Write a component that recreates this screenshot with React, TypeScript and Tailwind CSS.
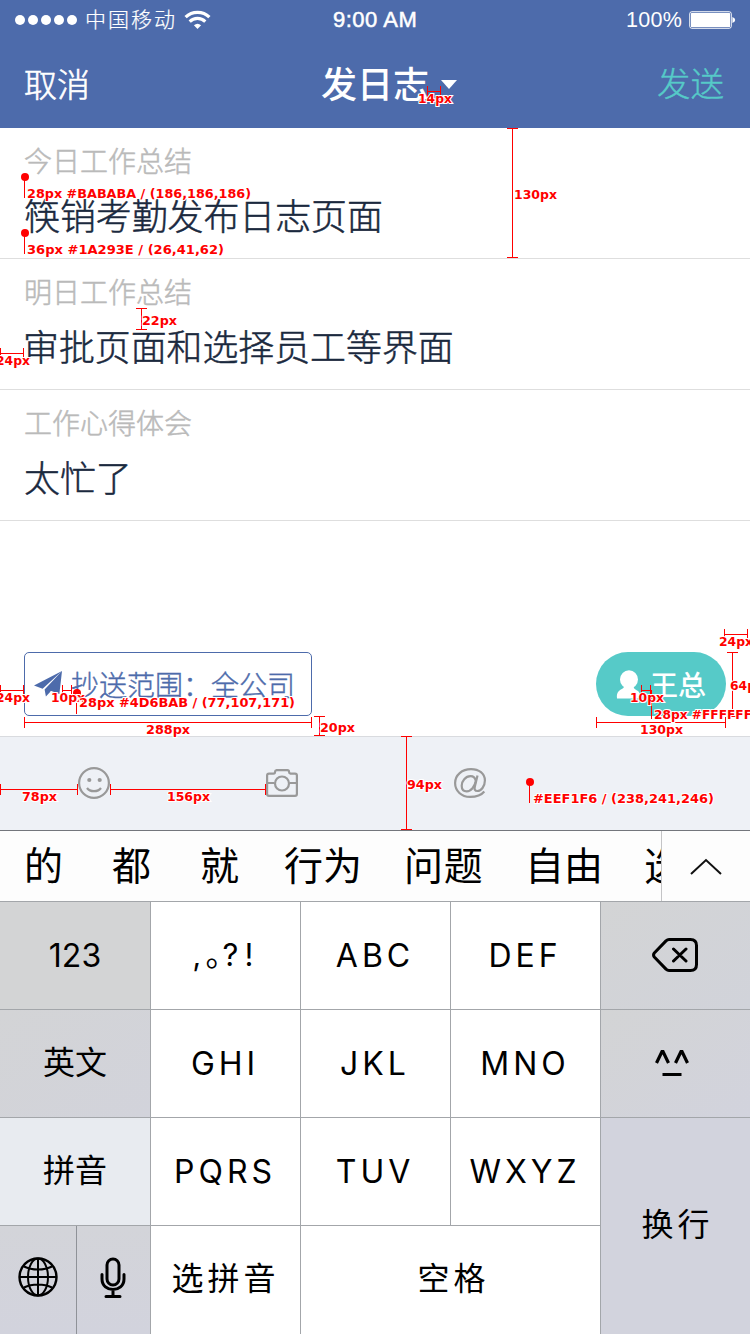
import React from "react";

const CJK = "font-['Noto_Sans_CJK_SC',sans-serif]";
const LINE = "border-[#a3a6aa]";

function StatusBar() {
  return (
    <div className="flex h-10 items-center text-white">
      <div className="flex w-[333px] items-center">
        <div className="ml-[15px] flex gap-[3px]">
          {[0, 1, 2, 3, 4].map((i) => (
            <span key={i} className="size-[10px] rounded-full bg-white" />
          ))}
        </div>
        <span className="-mt-[4px] ml-[8px] text-[21px] leading-10 font-light tracking-[2px] whitespace-nowrap [-webkit-text-stroke:0.2px_currentColor]">中国移动</span>
        <svg className="ml-[7px]" width="27" height="20" viewBox="0 0 27 20" fill="none" stroke="#fff" strokeWidth="3.2">
          <path d="M1.6 7.2a17 17 0 0 1 23.8 0" />
          <path d="M5.7 11.6a11.2 11.2 0 0 1 15.6 0" />
          <path d="M13.5 19l-3.6-3.7a5.4 5.4 0 0 1 7.2 0z" fill="#fff" stroke="none" />
        </svg>
      </div>
      <span className="w-[293px] font-['Liberation_Sans',sans-serif] text-[22px] leading-10 tracking-[0.5px] [-webkit-text-stroke:0.5px_#fff]">9:00 AM</span>
      <span className="w-[63px] font-['Liberation_Sans',sans-serif] text-[21.5px] leading-10 tracking-[0.3px]">100%</span>
      <svg width="47" height="18" viewBox="0 0 47 18">
        <rect x="0.75" y="0.75" width="41.5" height="16.5" rx="2" fill="none" stroke="#fff" />
        <rect x="2" y="2" width="39" height="14" rx="0.5" fill="#fff" />
        <path d="M43.4 6q2.8 1 2.8 3t-2.8 3z" fill="#fff" />
      </svg>
    </div>
  );
}

function NavBar() {
  return (
    <div className="flex h-[88px] items-center px-6 text-white">
      <span className="w-[297px] text-[33px] font-light [-webkit-text-stroke:0.6px_currentColor]">取消</span>
      <span className="pb-[5px] text-[36px] font-medium">发日志</span>
      <svg className="ml-[12px]" width="16" height="9" viewBox="0 0 16 9">
        <path d="M0 0h16L8 9z" fill="#fff" />
      </svg>
      <span className="mr-[2px] ml-auto pb-[3px] text-[33.5px] font-light text-[#56cac8] [-webkit-text-stroke:0.4px_currentColor]">发送</span>
    </div>
  );
}

function Entry({ label, value, inset = "pl-6" }: { label: string; value: string; inset?: string }) {
  return (
    <div className="h-[131px] border-b border-[#dedede] pt-[11px]">
      <div className="h-[42px] pl-6 text-[28px] leading-[42px] font-light text-[#bababa] [-webkit-text-stroke:0.5px_currentColor]">{label}</div>
      <div className={"mt-[7px] text-[35.9px] leading-[52px] font-light text-[#1a293e] [-webkit-text-stroke:0.5px_currentColor] " + inset}>{value}</div>
    </div>
  );
}

function Recipients() {
  return (
    <div className="flex h-[215px] items-end justify-between px-6 pb-5">
      <div className="flex h-16 w-72 items-center rounded-[5px] border border-[#4d6bab] pl-[9px] text-[#4d6bab]">
        <svg width="29" height="26" viewBox="0 0 29 26" fill="currentColor">
          <path d="M28 0L0 14.5l8.6 3.2zM28 0L10.6 18.4l1.3 7.1 4.2-4.6zM28 0l-12 19.600 9.400 3.500z" />
        </svg>
        <span className="ml-[8px] text-[28px] font-light whitespace-nowrap [-webkit-text-stroke:0.4px_currentColor]">抄送范围：全公司</span>
      </div>
      <div className="flex h-16 w-[130px] items-center rounded-full bg-[#56cac8] pl-5 text-white">
        <svg width="26" height="29" viewBox="0 0 26 29">
          <ellipse cx="13" cy="9.500" rx="9" ry="9.300" fill="#fff" />
          <path d="M8 15c1 3-2 3.500-4.500 5.500S.5 25 1 28.500h23c0-4 0-6.500-3-8s-4-3-3-5.500z" fill="#fff" />
        </svg>
        <span className="ml-[8px] pb-px text-[28px] font-medium">王总</span>
      </div>
    </div>
  );
}

function Toolbar() {
  return (
    <div className="flex h-[94px] items-center border-t border-[#d9dbdf] bg-[#eef1f6] pb-[2px] pl-[78px] text-[#999]">
      <svg width="32" height="32" viewBox="0 0 32 32" fill="none" stroke="currentColor" strokeWidth="2.200">
        <circle cx="16" cy="16" r="14.900" />
        <circle cx="11.300" cy="13" r="2.100" fill="currentColor" stroke="none" />
        <circle cx="21.700" cy="13" r="2.100" fill="currentColor" stroke="none" />
        <path d="M9 21c3 4.300 11 4.300 14 0" />
      </svg>
      <svg className="ml-[156px]" width="32" height="28" viewBox="0 0 32 28" fill="none" stroke="currentColor" strokeWidth="2.200">
        <path d="M1.100 25V6.500Q1.100 4.600 3 4.600h4.500Q9 4.600 9 3t1.600-1.900h10.800Q23 1.100 23 2.700t1.500 1.900H29q1.900 0 1.900 2V25q0 1.900-1.900 1.900H3q-1.900 0-1.900-1.900zM1 14h7.500M23.500 14H31" />
        <circle cx="16" cy="14.500" r="7" />
      </svg>
      <svg className="ml-[156px]" width="32" height="30" viewBox="0 0 32 30" fill="none" stroke="currentColor" strokeWidth="2.200">
        <path d="M30.300 23.500C27.500 27 22 28.900 16 28.900 7.500 28.900 1.100 23 1.100 15S8 1.100 17 1.100c8 0 13.900 4.500 13.900 11.400C30.900 18.500 27 23 23.500 23c-3 0-3.200-2-2.700-4.300L23.500 7.500" />
        <path d="M21.800 13c-.5-3-2.300-4.800-5.300-4.800-5 0-8.800 4.800-8.800 9.500 0 3.500 2 5.600 5 5.600 4.500 0 8-4.800 9.100-10.300z" />
      </svg>
    </div>
  );
}

function Candidates() {
  return (
    <div className="flex h-[72px] border-t border-b border-t-[#73767c] border-b-[#a3a6aa] bg-[#fdfdfd] text-black">
      <div className="flex w-[662px] items-center overflow-hidden border-r border-[#c4c4c6] pb-[6px] pl-6 text-[39px] leading-[60px] whitespace-nowrap">
        <span className="w-[88px] shrink-0">的</span>
        <span className="w-[88px] shrink-0">都</span>
        <span className="w-[84px] shrink-0">就</span>
        <span className="w-[120px] shrink-0">行为</span>
        <span className="w-[121px] shrink-0 tracking-[0.8px]">问题</span>
        <span className="w-[119px] shrink-0">自由</span>
        <span className="w-[39px] shrink-0">选</span>
      </div>
      <div className="flex flex-1 items-center justify-center">
        <svg width="32" height="17" viewBox="0 0 32 17" fill="none" stroke="#111" strokeWidth="2">
          <path d="M1 16L16 2l15 14" />
        </svg>
      </div>
    </div>
  );
}

const key = "flex items-center justify-center border-[#a3a6aa]";
const latin = key + " border-r border-b bg-white font-['Inter',sans-serif] text-[32px] pr-px tracking-[4px]";

function Keyboard() {
  return (
    <div className="grid h-[432px] grid-cols-[151px_150px_150px_150px_149px] grid-rows-[108px_108px_108px_108px] text-black">
      <div className={key + " border-r border-b bg-[#d3d4d5] font-['Inter',sans-serif] text-[32px]"}>123</div>
      <div className={key + " border-r border-b bg-white pr-1"}>
        <span className="flex items-baseline pb-[2px] font-['Inter','Noto_Sans_CJK_SC',sans-serif] text-[32px]">
          <span className="w-[13px] text-[30px]">,</span>
          <span className="w-[17px]">。</span>
          <span className="w-[22px] text-[31px]">?</span>
          <span className="w-[10px] text-[31px]">!</span>
        </span>
      </div>
      <div className={latin}>ABC</div>
      <div className={latin}>DEF</div>
      <div className={key + " border-b bg-linear-to-br from-[#d3d4d5] to-[#d1d3da] pr-[2px] pb-[2px]"}>
        <svg width="46" height="34" viewBox="0 0 46 34" fill="none" stroke="#000" strokeWidth="3" strokeLinejoin="round" strokeLinecap="round">
          <path d="M17 1.500h21.500q6 0 6 6v19q0 6-6 6H17q-1.500 0-3-1.400L2.300 19q-1.500-2 0-4L14 2.900q1.500-1.400 3-1.400zM21.500 11l12.500 12M34 11L21.500 23" />
        </svg>
      </div>

      <div className={key + " border-r border-b bg-linear-to-br from-[#d3d4d6] to-[#d2d3db] pb-[7px] text-[32px]"}>英文</div>
      <div className={latin}>GHI</div>
      <div className={latin}>JKL</div>
      <div className={latin}>MNO</div>
      <div className={key + " border-b bg-linear-to-br from-[#d3d4d5] to-[#d2d3dd]"}>
        <svg className="mr-[7px]" width="34" height="28" viewBox="0 0 34 28" fill="none" stroke="#000" strokeWidth="3.200">
          <path d="M1.500 13L7.500 0.500 13.500 13M20.500 13l6-12.500 6 12.500M7.500 24.500h19" />
        </svg>
      </div>

      <div className={key + " border-r border-b bg-[#e8ebf0] pb-[7px] text-[32px]"}>拼音</div>
      <div className={latin}>PQRS</div>
      <div className={latin}>TUV</div>
      <div className={latin}>WXYZ</div>
      <div className={key + " row-span-2 bg-[#d2d3dd] pb-[8px] pl-1 text-[32px] tracking-[4px]"}>换行</div>

      <div className={"flex border-r bg-linear-to-b from-[#d3d4d9] to-[#d2d3dd] " + LINE}>
        <div className="flex w-[77px] items-center justify-center border-r border-[#8f9298] pr-px pb-[6px]">
          <svg width="40" height="40" viewBox="0 0 40 40" fill="none" stroke="#000" strokeWidth="2">
            <circle cx="20" cy="20" r="18.500" strokeWidth="2.400" />
            <ellipse cx="20" cy="20" rx="10" ry="18.500" />
            <path d="M20 1.500v37M1.500 20h37M6 9.500c8 4 20 4 28 0M6 30.500c8-4 20-4 28 0" />
          </svg>
        </div>
        <div className="flex flex-1 items-center justify-center pr-px pb-1">
          <svg width="26" height="42" viewBox="0 0 26 42" fill="none" stroke="#000" strokeWidth="3" strokeLinecap="round">
            <rect x="7" y="2" width="12" height="26" rx="6" />
            <path d="M2 17.500V22c0 14 22 14 22 0v-4.500M13 33v6M6 39.500h14" />
          </svg>
        </div>
      </div>
      <div className={key + " border-r bg-white pb-[8px] text-[32px] tracking-[4px]"}>选拼音</div>
      <div className={key + " col-span-2 border-r bg-white pb-[8px] pl-[6px] text-[32px] tracking-[4px]"}>空格</div>
    </div>
  );
}

const lines: string[] = [
  "M512.5 128V258M507 128.500h11M507 257.500h11",
  "M141.500 308V329M136 308.500h11M136 329.500h11",
  "M0 353.500H24M0.500 348v11M23.500 348v11",
  "M427 91.500H441M427.500 86v11M440.500 86v11",
  "M0 690.500H24M0.500 685v11M23.500 685v11",
  "M62 690.500H72M62.500 685v11M71.500 685v11",
  "M24 722.500H312M24.500 717v11M311.500 717v11",
  "M319.500 716V736M314 716.500h11M314 735.500h11",
  "M724 634.500H748M724.500 629v11M747.500 629v11",
  "M732.500 652V716M727 652.500h11M727 716.500h11",
  "M641 690.500H651M641.500 685v11M650.500 685v11",
  "M596 722.500H726M596.500 717v11M725.500 717v11",
  "M406.500 737V829M401 736.500h11M401 829.500h11",
  "M0 789.500H78M0.500 784v11M77.500 784v11",
  "M110 789.500H266M110.500 784v11M265.500 784v11",
  "M24.500 177V198M24.500 233V254M76.500 693V714M651.500 690V719M529.500 782V803",
];

const dots: [number, number][] = [
  [25, 177],
  [25, 233],
  [77, 693],
  [530, 782],
];

const notes: [string, number, number, number][] = [
  ["28px #BABABA / (186,186,186)", 27, 198, 224],
  ["36px #1A293E / (26,41,62)", 27, 254, 197],
  ["14px", 418, 103, 34],
  ["130px", 514, 199, 43],
  ["22px", 142, 325, 35],
  ["24px", -4, 365, 34],
  ["24px", -4, 702, 34],
  ["10px", 51, 702, 34],
  ["28px #4D6BAB / (77,107,171)", 79, 707, 216],
  ["288px", 146, 734, 44],
  ["20px", 320, 732, 35],
  ["24px", 719, 646, 34],
  ["64px", 730, 690, 34],
  ["10px", 630, 702, 34],
  ["28px #FFFFFF", 654, 719, 98],
  ["130px", 640, 734, 43],
  ["94px", 407, 789, 35],
  ["78px", 22, 801, 35],
  ["156px", 167, 801, 43],
  ["#EEF1F6 / (238,241,246)", 533, 803, 181],
];

function Measurements() {
  return (
    <svg className="pointer-events-none absolute inset-0" width="750" height="1334" viewBox="0 0 750 1334">
      <path d={lines.join("")} fill="none" stroke="#f00" shapeRendering="crispEdges" />
      {dots.map(([x, y]) => (
        <circle key={`${x}-${y}`} cx={x} cy={y} r="4" fill="#f00" />
      ))}
      <g className="font-['DejaVu_Sans',sans-serif] text-[12px] font-bold" fill="#f00" stroke="#fff" strokeWidth="2" paintOrder="stroke">
        {notes.map(([text, x, y, w]) => (
          <text key={`${x}-${y}`} x={x} y={y} textLength={w} lengthAdjust="spacingAndGlyphs">
            {text}
          </text>
        ))}
      </g>
    </svg>
  );
}

export default function App() {
  return (
    <div className={"relative h-[1334px] w-[750px] overflow-hidden bg-white " + CJK}>
      <header className="h-32 bg-[#4d6bab]">
        <StatusBar />
        <NavBar />
      </header>
      <Entry label="今日工作总结" value="筷销考勤发布日志页面" />
      <Entry label="明日工作总结" value="审批页面和选择员工等界面" inset="pl-[23px]" />
      <Entry label="工作心得体会" value="太忙了" />
      <Recipients />
      <Toolbar />
      <Candidates />
      <Keyboard />
      <Measurements />
    </div>
  );
}
